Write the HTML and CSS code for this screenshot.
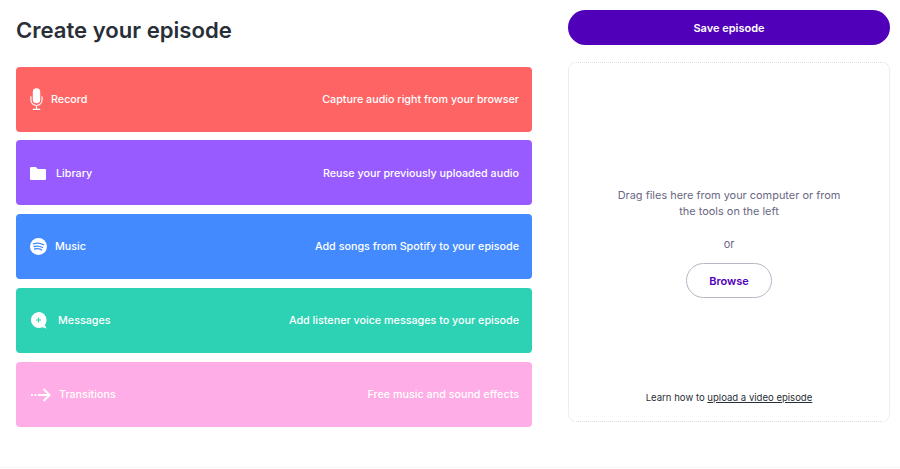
FILE: index.html
```html
<!DOCTYPE html>
<html lang="en">
<head>
<meta charset="utf-8">
<title>Create your episode</title>
<link rel="stylesheet" href="styles.css">
</head>
<body>
<main class="page">
  <section class="left">
    <h1 class="title">Create your episode</h1>
    <div class="tools">
      <a class="tool record">
        <span class="tool-name">
          <svg class="icon mic" viewBox="0 0 14 24"><rect x="3" y="0.5" width="8" height="16" rx="4" fill="#fff"/><path d="M1 9v4a6 6 0 0 0 12 0V9" fill="none" stroke="#fff" stroke-width="1.2"/><path d="M7 19v4M3 23.2h8" stroke="#fff" stroke-width="1.2" fill="none"/></svg>
          Record
        </span>
        <span class="tool-desc">Capture audio right from your browser</span>
      </a>
      <a class="tool library">
        <span class="tool-name">
          <svg class="icon folder" viewBox="0 0 16 13"><path d="M1.2 0h4.600l2 2h7a1.200 1.200 0 0 1 1.200 1.200v8.600a1.200 1.200 0 0 1-1.200 1.200H1.200A1.200 1.200 0 0 1 0 11.800V1.200A1.200 1.200 0 0 1 1.200 0z" fill="#fff"/></svg>
          Library
        </span>
        <span class="tool-desc">Reuse your previously uploaded audio</span>
      </a>
      <a class="tool music">
        <span class="tool-name">
          <svg class="icon spotify" viewBox="0 0 17 17"><circle cx="8.500" cy="8.500" r="8.500" fill="#fff"/><path d="M3.400 5.800c3.500-1 7.200-.7 10.200 1M4 8.500c2.900-.8 6-.5 8.600 1M4.600 11c2.400-.6 4.900-.3 7 .9" fill="none" stroke="#448aff" stroke-width="1.300" stroke-linecap="round"/></svg>
          Music
        </span>
        <span class="tool-desc">Add songs from Spotify to your episode</span>
      </a>
      <a class="tool messages">
        <span class="tool-name">
          <svg class="icon bubble" viewBox="0 0 18 17"><path d="M8.500 0a8 8 0 0 1 8 8c0 2-.6 3.600-1.700 5l1.900 3.500-4.300-1.300a8 8 0 1 1-3.900-15.200z" fill="#fff"/><path d="M8.500 5.500v5M6 8h5" stroke="#2dd1b4" stroke-width="1.100" fill="none"/></svg>
          Messages
        </span>
        <span class="tool-desc">Add listener voice messages to your episode</span>
      </a>
      <a class="tool transitions">
        <span class="tool-name">
          <svg class="icon arrow" viewBox="0 0 20 14"><path d="M0 7h2M3.500 7h2M7 7h11.500M12.500 1l6 6-6 6" fill="none" stroke="#fff" stroke-width="2"/></svg>
          Transitions
        </span>
        <span class="tool-desc">Free music and sound effects</span>
      </a>
    </div>
  </section>
  <aside class="right">
    <button class="save">Save episode</button>
    <div class="drop">
      <div class="drop-main">
        <p class="drag">Drag files here from your computer or from<br>the tools on the left</p>
        <p class="or">or</p>
        <button class="browse">Browse</button>
      </div>
      <p class="learn">Learn how to <a class="learn-link">upload a video episode</a></p>
    </div>
  </aside>
</main>
</body>
</html>
```

FILE: styles.css
```css
* { box-sizing: border-box; }
html, body { margin: 0; height: 100%; }
body {
  background: #fff;
  font-family: "Inter", "Liberation Sans", sans-serif;
  color: #292f36;
  overflow: hidden;
}
.page {
  display: flex;
  align-items: flex-start;
  gap: 36px;
  height: 468px;
  padding: 10px 10px 0 16px;
  border-bottom: 1px solid #f4f4f5;
}
.left { width: 516px; flex: none; }
.title {
  margin: 0;
  height: 56.500px;
  padding-top: 6px;
  font-size: 22.100px;
  line-height: 29px;
  font-weight: 600;
  color: #292f36;
}
.tools { display: flex; flex-direction: column; gap: 8.800px; }
.tool {
  display: flex;
  align-items: center;
  justify-content: space-between;
  height: 65px;
  padding: 0.800px 13px 0 14px;
  border-radius: 4px;
  color: #fff;
  font-size: 10.750px;
  font-weight: 500;
}
.tool-name { display: flex; align-items: center; }
.record { background: #ff6464; }
.library { background: #975bff; }
.music { background: #448aff; }
.messages { background: #2dd1b4; }
.transitions { background: #ffade6; }
.icon { display: block; flex: none; margin-right: 9px; }
.mic { width: 13px; height: 24px; margin-right: 8px; }
.folder { width: 16px; height: 13px; margin-right: 10px; }
.spotify { width: 17px; height: 17px; margin-right: 8px; }
.bubble { width: 18px; height: 17px; margin-right: 10px; }
.arrow { width: 20px; height: 14px; margin-left: 1px; margin-right: 8px; }
.right { width: 322px; flex: none; }
.save {
  display: block;
  width: 100%;
  height: 35px;
  border: 0;
  border-radius: 18px;
  background: #5000b9;
  color: #fff;
  font: 600 11px "Inter", "Liberation Sans", sans-serif;
}
.drop {
  display: flex;
  flex-direction: column;
  height: 360px;
  margin-top: 17px;
  padding: 0 16px;
  border: 1px dotted #dcdce0;
  border-radius: 8px;
  text-align: center;
}
.drop-main { flex: 1; padding-top: 124px; }
.drag { margin: 0; font-size: 10.950px; line-height: 16px; color: #6a6884; }
.or { margin: 17px 0 0; font-size: 11px; line-height: 16px; color: #6a6884; }
.browse {
  display: block;
  width: 86px;
  height: 35px;
  margin: 11px auto 0;
  border: 1px solid #b9b6c6;
  border-radius: 18px;
  background: #fff;
  color: #5000b9;
  font: 600 11px "Inter", "Liberation Sans", sans-serif;
}
.learn { margin: 0 0 16px; font-size: 9.550px; line-height: 14px; color: #292f36; }
.learn-link { text-decoration: underline; }
```
